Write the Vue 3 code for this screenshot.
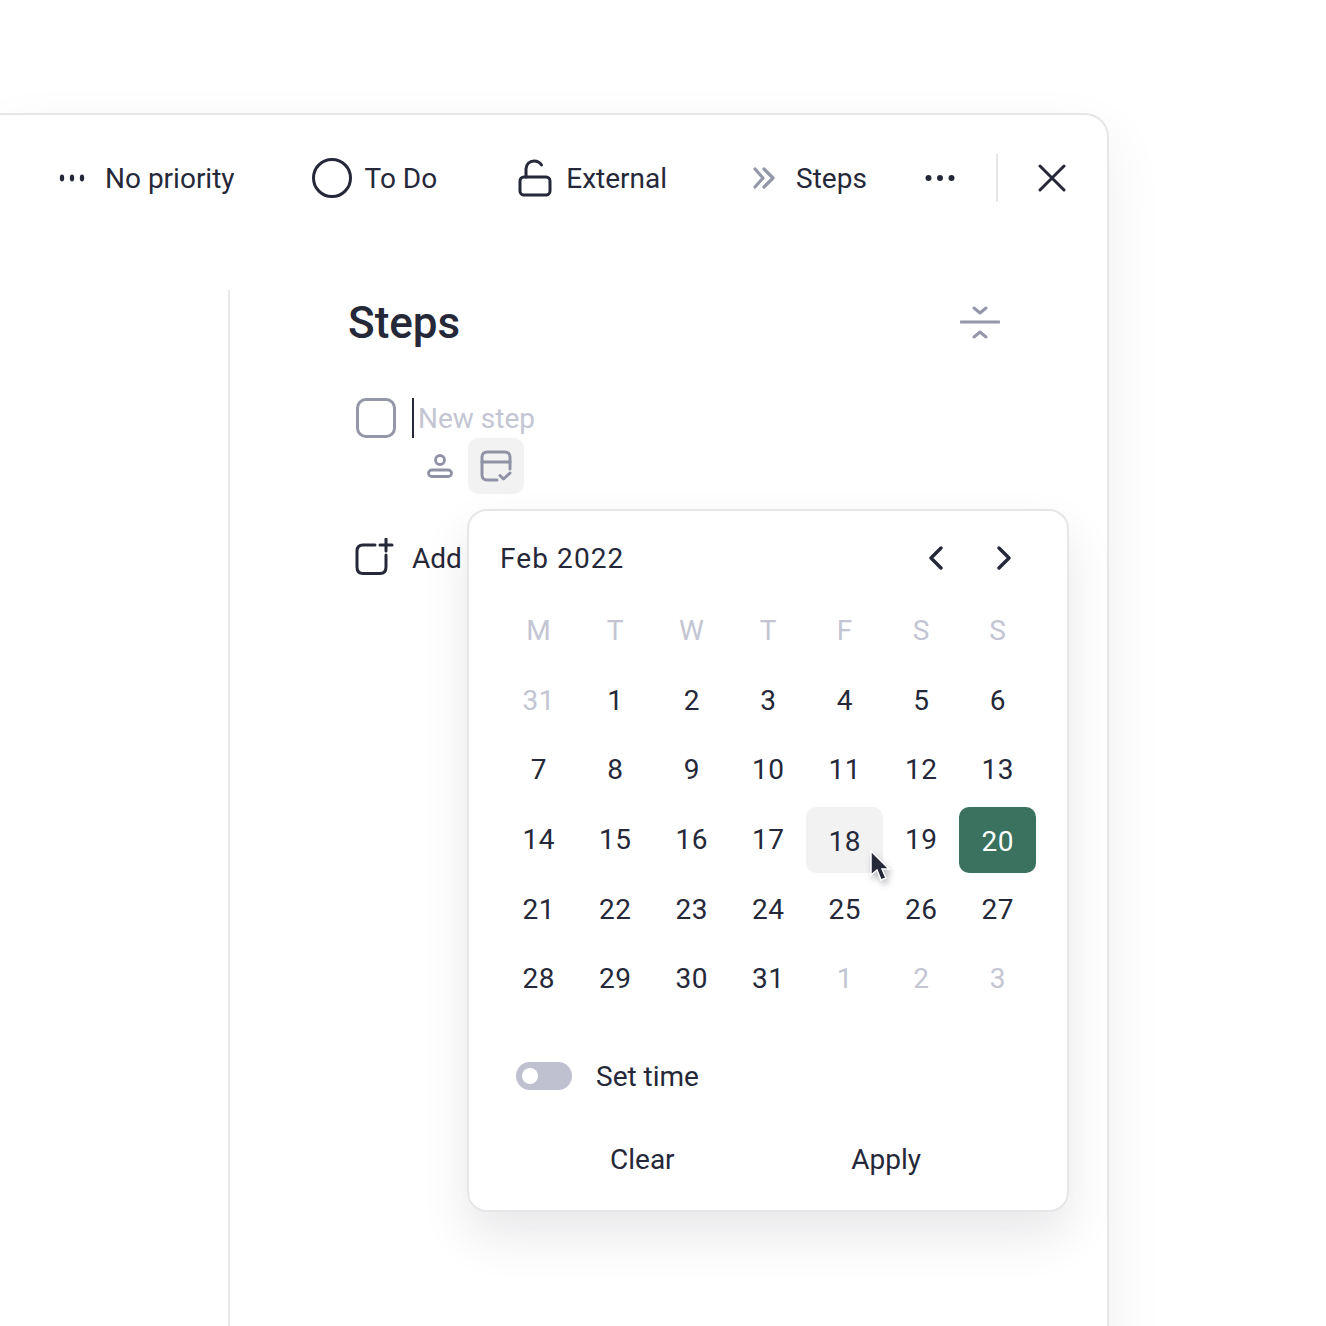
<template>
  <div class="page">
    <div class="panel">
      <div class="toolbar">
        <div class="tool tool-priority">
          <svg class="icon-dots-small" width="26" height="8" viewBox="0 0 26 8">
            <ellipse cx="3" cy="4" rx="2.200" ry="3.400" /><ellipse cx="13" cy="4" rx="2.200" ry="3.400" /><ellipse cx="23" cy="4" rx="2.200" ry="3.400" />
          </svg>
          <span>No priority</span>
        </div>
        <div class="tool tool-status">
          <svg width="40" height="40" viewBox="0 0 40 40" fill="none">
            <circle cx="20" cy="20" r="18.5" stroke="#252839" stroke-width="3" />
          </svg>
          <span>To Do</span>
        </div>
        <div class="tool tool-access">
          <svg width="34" height="38" viewBox="0 0 34 38" fill="none" stroke="#252839" stroke-width="3" stroke-linecap="round">
            <rect x="2" y="18" width="30" height="18" rx="4" />
            <path d="M8 18V10C8 5.5 11.5 2 16 2C19.5 2 22 3.5 23.5 6" />
          </svg>
          <span>External</span>
        </div>
        <div class="tool tool-view">
          <svg width="24" height="24" viewBox="0 0 24 24" fill="none" stroke="#9497a8" stroke-width="3.200" stroke-linecap="round" stroke-linejoin="round">
            <path d="M3 3L11 12L3 21" /><path d="M12 3L21 12L12 21" />
          </svg>
          <span>Steps</span>
        </div>
        <svg class="icon-more" width="30" height="8" viewBox="0 0 30 8">
          <circle cx="3.5" cy="4" r="3" /><circle cx="15" cy="4" r="3" /><circle cx="26.5" cy="4" r="3" />
        </svg>
        <div class="divider"></div>
        <svg class="icon-close" width="28" height="28" viewBox="0 0 28 28" fill="none" stroke="#252839" stroke-width="3" stroke-linecap="round">
          <path d="M2 2L26 26M26 2L2 26" />
        </svg>
      </div>

      <div class="content">
        <div class="side"></div>
        <div class="main">
          <div class="steps-head">
            <h1>Steps</h1>
            <svg width="40" height="34" viewBox="0 0 40 34" fill="none" stroke="#9497a8" stroke-width="3" stroke-linecap="round" stroke-linejoin="round">
              <path d="M1 16H39" />
              <path d="M14 2L20 7L26 2" />
              <path d="M14 31L20 26L26 31" />
            </svg>
          </div>

          <div class="new-step">
            <div class="checkbox"></div>
            <div class="caret"></div>
            <span class="placeholder">New step</span>
          </div>

          <div class="step-actions">
            <svg width="26" height="24" viewBox="0 0 26 24" fill="none" stroke="#8f92a4" stroke-width="2.800">
              <circle cx="13" cy="6" r="4.500" />
              <rect x="1.500" y="16" width="23" height="6.500" rx="3.250" />
            </svg>
            <div class="action-active">
              <svg width="32" height="32" viewBox="0 0 32 32" fill="none" stroke="#8f92a4" stroke-width="3" stroke-linecap="round" stroke-linejoin="round">
                <path d="M17 30H7C4 30 2 28 2 25V7C2 4 4 2 7 2H25C28 2 30 4 30 7V19" />
                <path d="M2 12H30" />
                <path d="M20 25.500L23.500 29L30 23" />
              </svg>
            </div>
          </div>

          <div class="add-row">
            <svg width="40" height="38" viewBox="0 0 40 38" fill="none" stroke="#252839" stroke-width="3" stroke-linecap="round">
              <path d="M21 7H9C5 7 3 9.500 3 13V29C3 33 5 35.500 9 35.500H26C30 35.500 32 33 32 29V17" />
              <path d="M32 1V13M26 7H38" />
            </svg>
            <span>Add</span>
          </div>
        </div>
      </div>

      <div class="calendar">
        <div class="cal-head">
          <span class="cal-title">Feb 2022</span>
          <div class="cal-nav">
            <svg width="16" height="24" viewBox="0 0 16 24" fill="none" stroke="#252839" stroke-width="3.400" stroke-linecap="round" stroke-linejoin="round">
              <path d="M13 2L3 12L13 22" />
            </svg>
            <svg width="16" height="24" viewBox="0 0 16 24" fill="none" stroke="#252839" stroke-width="3.400" stroke-linecap="round" stroke-linejoin="round">
              <path d="M3 2L13 12L3 22" />
            </svg>
          </div>
        </div>

        <div class="cal-grid">
          <div v-for="(d, i) in weekDays" :key="'w' + i" class="cell weekday">{{ d }}</div>
          <div
            v-for="(d, i) in days"
            :key="i"
            class="cell"
            :class="{ muted: d.muted, hovered: d.day === 18, selected: d.day === 20 }"
          >
            <span>{{ d.day }}</span>
          </div>
        </div>

        <div class="time-row">
          <div class="toggle"><div class="knob"></div></div>
          <span>Set time</span>
        </div>

        <div class="cal-actions">
          <span>Clear</span>
          <span>Apply</span>
        </div>

        <svg class="cursor" width="26" height="38" viewBox="0 0 26 38">
          <path d="M3 2V26L9 21L13 31L18 29L14 20H21Z" fill="#252839" stroke="#fff" stroke-width="1.500" />
        </svg>
      </div>
    </div>
  </div>
</template>

<script setup>
const weekDays = ['M', 'T', 'W', 'T', 'F', 'S', 'S']

const days = [{ day: 31, muted: true }]
for (let i = 1; i <= 6; i++) days.push({ day: i })
for (let i = 7; i <= 31; i++) days.push({ day: i })
for (let i = 1; i <= 3; i++) days.push({ day: i, muted: true })
</script>

<style>
html,
body {
  margin: 0;
  background: #fff;
}
</style>

<style scoped>
.page {
  width: 1326px;
  height: 1326px;
  padding-top: 113px;
  box-sizing: border-box;
  overflow: hidden;
  font-family: Roboto, "Liberation Sans", sans-serif;
  font-size: 28px;
  color: #252839;
}

.panel {
  position: relative;
  width: 1109px;
  height: 1300px;
  box-sizing: border-box;
  background: #fff;
  border: 2px solid #e6e6e9;
  border-left: none;
  border-radius: 0 24px 0 0;
  box-shadow: 0 24px 60px rgba(30, 32, 50, 0.07);
}

.toolbar {
  display: flex;
  align-items: center;
  height: 126px;
  padding-left: 59px;
}

.tool {
  display: flex;
  align-items: center;
  white-space: nowrap;
}

.tool span {
  padding-top: 1px;
}

.icon-dots-small {
  fill: #252839;
  margin-right: 20px;
}

.tool-status {
  margin-left: 77px;
  gap: 13px;
}

.tool-access {
  margin-left: 81px;
  gap: 14px;
}

.tool-view {
  margin-left: 85px;
  gap: 20px;
}

.icon-more {
  fill: #252839;
  margin-left: 58px;
}

.divider {
  width: 2px;
  height: 48px;
  margin-left: 41px;
  background: #e6e6e9;
}

.icon-close {
  margin-left: 40px;
}

.content {
  display: flex;
  margin-top: 49px;
  height: 1100px;
}

.side {
  width: 228px;
  border-right: 2px solid #e8e8eb;
}

.main {
  width: 770px;
  padding-left: 118px;
  box-sizing: border-box;
}

.steps-head {
  display: flex;
  align-items: center;
  justify-content: space-between;
  height: 66px;
}

.steps-head h1 {
  margin: 0;
  font-size: 44px;
  font-weight: 500;
  line-height: 66px;
}

.new-step {
  display: flex;
  align-items: center;
  margin-top: 42px;
  padding-left: 8px;
}

.checkbox {
  width: 34px;
  height: 34px;
  border: 3px solid #9497a8;
  border-radius: 10px;
}

.caret {
  width: 2px;
  height: 40px;
  margin-left: 16px;
  background: #252839;
}

.placeholder {
  margin-left: 4px;
  color: #c3c5d3;
}

.step-actions {
  display: flex;
  align-items: center;
  margin-left: 79px;
  height: 56px;
}

.action-active {
  display: flex;
  align-items: center;
  justify-content: center;
  width: 56px;
  height: 56px;
  margin-left: 15px;
  border-radius: 10px;
  background: #f2f2f3;
}

.add-row {
  display: flex;
  align-items: center;
  gap: 18px;
  margin-top: 44px;
  padding-left: 6px;
}

.add-row span {
  padding-top: 2px;
}

.calendar {
  position: absolute;
  left: 467px;
  top: 394px;
  width: 602px;
  height: 703px;
  box-sizing: border-box;
  padding: 0 31px;
  background: #fff;
  border: 2px solid #e6e6e9;
  border-radius: 20px;
  box-shadow: 0 24px 48px rgba(30, 32, 50, 0.1);
}

.cal-head {
  display: flex;
  align-items: center;
  justify-content: space-between;
  height: 94px;
}

.cal-title {
  letter-spacing: 1.100px;
}

.cal-nav {
  display: flex;
  gap: 52px;
  margin-right: 24px;
}

.cal-grid {
  display: grid;
  grid-template-columns: repeat(7, 76.5px);
  grid-auto-rows: 69.6px;
  margin-top: -9px;
}

.cell {
  display: flex;
  align-items: center;
  justify-content: center;
  border-radius: 10px;
  letter-spacing: 0.5px;
}

.cell span,
.weekday {
  padding-left: 1px;
}

.weekday,
.muted {
  color: #c3c5d3;
}

.hovered {
  background: #f2f2f3;
  margin-top: 2px;
  height: 66px;
}

.selected {
  background: #3a715f;
  color: #fff;
  margin-top: 2px;
  height: 66px;
}

.hovered span,
.selected span {
  transform: translateY(2px);
}

.time-row {
  display: flex;
  align-items: center;
  gap: 24px;
  margin-top: 46px;
  padding-left: 16px;
}

.toggle {
  display: flex;
  align-items: center;
  width: 56px;
  height: 28px;
  padding-left: 6px;
  box-sizing: border-box;
  border-radius: 14px;
  background: #bfc1d0;
}

.knob {
  width: 16px;
  height: 16px;
  border-radius: 50%;
  background: #fff;
}

.cal-actions {
  display: flex;
  justify-content: space-between;
  margin-top: 50px;
  padding: 0 115px 0 110px;
}

.cursor {
  position: absolute;
  left: 399px;
  top: 338px;
  filter: drop-shadow(2px 4px 3px rgba(30, 32, 50, 0.3));
}
</style>
